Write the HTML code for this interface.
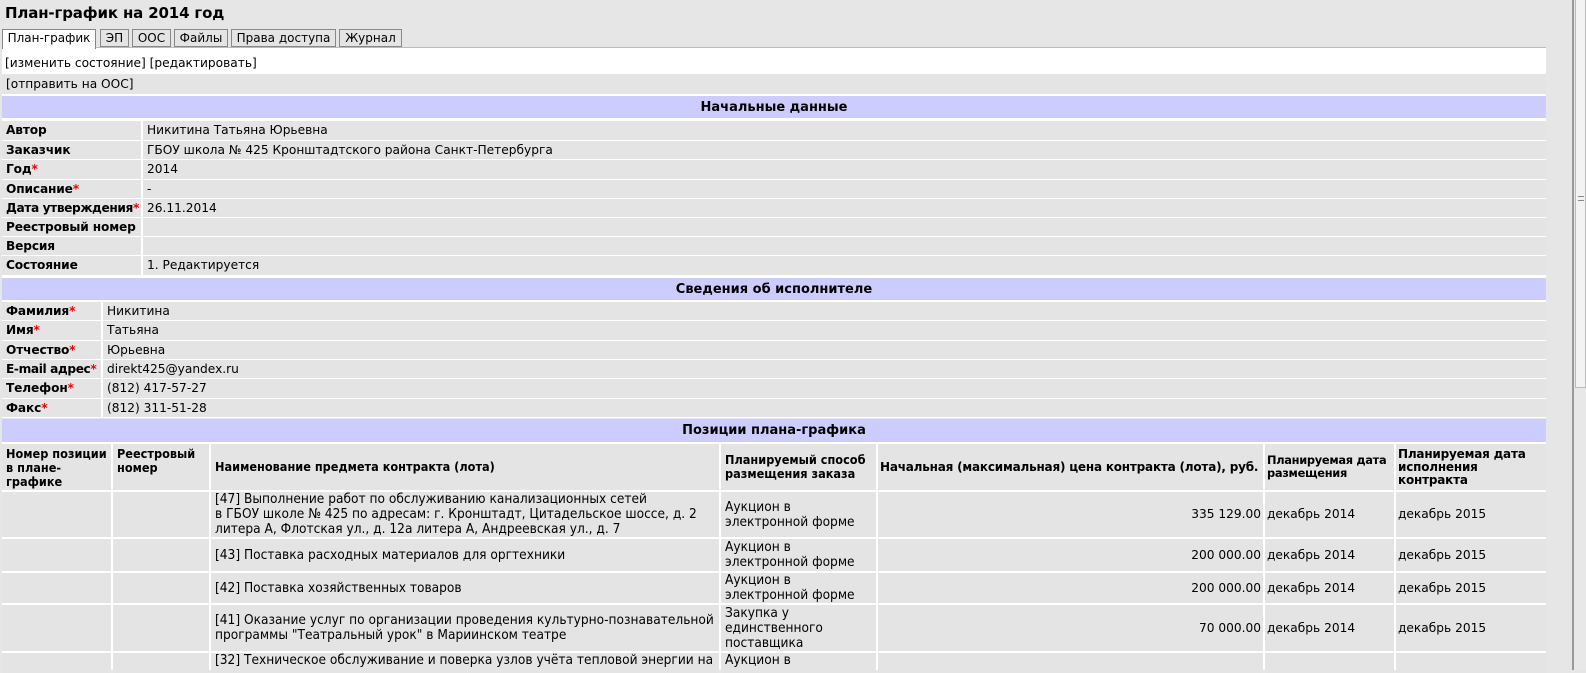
<!DOCTYPE html>
<html><head><meta charset="utf-8">
<style>
*{margin:0;padding:0;box-sizing:border-box}
body{width:1586px;height:670px;overflow:hidden;background:#e6e6e6;font-family:"DejaVu Sans",Verdana,sans-serif;font-size:12.2px;color:#000;position:relative}
.a{position:absolute}
.c{position:absolute;background:#e4e4e4;display:flex;align-items:center;padding-left:4px;white-space:nowrap;line-height:15px}
.b{font-weight:bold;letter-spacing:-0.15px}
.r{color:#e00}
.h{position:absolute;left:2px;width:1544px;background:#ccccff;font-weight:bold;font-size:13px;display:flex;align-items:center;justify-content:center}
.n{font-family:"DejaVu Sans Condensed","Liberation Sans Narrow",sans-serif;font-size:13.6px;line-height:15px;letter-spacing:0}
.nh{font-size:12.6px;line-height:14px}
.t{position:absolute;top:29px;height:18px;border:1px solid #888;background:#e4e4e4;font-size:12px;line-height:16px;text-align:center}
.th{align-items:flex-start;padding-top:3px;white-space:normal}
.wr{white-space:normal}
.hb{font-size:12px;letter-spacing:-0.2px;line-height:13px}
</style></head><body>
<div class="a b" style="left:5px;top:3px;font-size:15px;line-height:20px">План-график на 2014 год</div>
<div class="a" style="left:2px;top:47px;width:1544px;height:1px;background:#bbb"></div>
<div class="a" style="left:2px;top:48px;width:1544px;height:26px;background:#fff"></div>
<div class="t" style="left:2px;width:94px;background:#fff;border-bottom:none;height:20px">План-график</div>
<div class="t" style="left:100px;width:29px">ЭП</div>
<div class="t" style="left:132px;width:39px">ООС</div>
<div class="t" style="left:174px;width:54px">Файлы</div>
<div class="t" style="left:231px;width:105px">Права доступа</div>
<div class="t" style="left:339px;width:63px">Журнал</div>
<div class="a" style="left:5px;top:55px;line-height:16px">[изменить состояние] [редактировать]</div>
<div class="c" style="left:2px;top:75px;width:1544px;height:19px">[отправить на ООС]</div>
<div class="a" style="left:2px;top:94px;width:1544px;height:2px;background:#fff"></div>

<div class="h" style="top:96px;height:22px">Начальные данные</div>
<div class="a" style="left:2px;top:118px;width:1544px;height:300px;background:#fff"></div>
<div class="c b" style="left:2px;top:121px;width:139px;height:19px">Автор</div><div class="c" style="left:143px;top:121px;width:1403px;height:19px">Никитина Татьяна Юрьевна</div>
<div class="c b" style="left:2px;top:141px;width:139px;height:18px">Заказчик</div><div class="c" style="left:143px;top:141px;width:1403px;height:18px">ГБОУ школа № 425 Кронштадтского района Санкт-Петербурга</div>
<div class="c b" style="left:2px;top:160px;width:139px;height:19px">Год<span class="r">*</span></div><div class="c" style="left:143px;top:160px;width:1403px;height:19px">2014</div>
<div class="c b" style="left:2px;top:180px;width:139px;height:18px">Описание<span class="r">*</span></div><div class="c" style="left:143px;top:180px;width:1403px;height:18px">-</div>
<div class="c b" style="left:2px;top:199px;width:139px;height:18px;letter-spacing:-0.4px">Дата утверждения<span class="r">*</span></div><div class="c" style="left:143px;top:199px;width:1403px;height:18px">26.11.2014</div>
<div class="c b" style="left:2px;top:218px;width:139px;height:18px">Реестровый номер</div><div class="c" style="left:143px;top:218px;width:1403px;height:18px"></div>
<div class="c b" style="left:2px;top:237px;width:139px;height:18px">Версия</div><div class="c" style="left:143px;top:237px;width:1403px;height:18px"></div>
<div class="c b" style="left:2px;top:256px;width:139px;height:19px">Состояние</div><div class="c" style="left:143px;top:256px;width:1403px;height:19px">1. Редактируется</div>

<div class="h" style="top:278px;height:22px">Сведения об исполнителе</div>
<div class="c b" style="left:2px;top:302px;width:99px;height:18px">Фамилия<span class="r">*</span></div><div class="c" style="left:103px;top:302px;width:1443px;height:18px">Никитина</div>
<div class="c b" style="left:2px;top:321px;width:99px;height:19px">Имя<span class="r">*</span></div><div class="c" style="left:103px;top:321px;width:1443px;height:19px">Татьяна</div>
<div class="c b" style="left:2px;top:341px;width:99px;height:18px">Отчество<span class="r">*</span></div><div class="c" style="left:103px;top:341px;width:1443px;height:18px">Юрьевна</div>
<div class="c b" style="left:2px;top:360px;width:99px;height:18px;letter-spacing:-0.4px">E-mail адрес<span class="r">*</span></div><div class="c" style="left:103px;top:360px;width:1443px;height:18px">direkt425@yandex.ru</div>
<div class="c b" style="left:2px;top:379px;width:99px;height:19px">Телефон<span class="r">*</span></div><div class="c" style="left:103px;top:379px;width:1443px;height:19px">(812) 417-57-27</div>
<div class="c b" style="left:2px;top:399px;width:99px;height:18px">Факс<span class="r">*</span></div><div class="c" style="left:103px;top:399px;width:1443px;height:18px">(812) 311-51-28</div>

<div class="h" style="top:419px;height:23px">Позиции плана-графика</div>
<div class="a" style="left:2px;top:442px;width:1544px;height:228px;background:#fff"></div>
<div class="c b n nh th" style="left:2px;top:444px;width:109px;height:46px">Номер позиции в плане-графике</div>
<div class="c b n nh th" style="left:113px;top:444px;width:96px;height:46px">Реестровый номер</div>
<div class="c b n nh" style="left:211px;top:444px;width:508px;height:46px">Наименование предмета контракта (лота)</div>
<div class="c b n nh wr" style="left:721px;top:444px;width:155px;height:46px">Планируемый способ размещения заказа</div>
<div class="c b hb" style="left:878px;top:444px;width:385px;height:46px;padding-left:2px">Начальная (максимальная) цена контракта (лота), руб.</div>
<div class="c b wr hb" style="left:1265px;top:444px;width:129px;height:46px;padding-left:2px;font-size:11.4px;letter-spacing:-0.3px">Планируемая дата размещения</div>
<div class="c b wr th hb" style="left:1396px;top:444px;width:150px;height:46px;padding-left:2px;padding-top:4px">Планируемая дата исполнения контракта</div>

<div class="c" style="left:2px;top:492px;width:109px;height:45px"></div><div class="c" style="left:113px;top:492px;width:96px;height:45px"></div>
<div class="c n wr" style="left:211px;top:492px;width:508px;height:45px">[47] Выполнение работ по обслуживанию канализационных сетей<br>в ГБОУ школе № 425 по адресам: г. Кронштадт, Цитадельское шоссе, д. 2 литера А, Флотская ул., д. 12а литера А, Андреевская ул., д. 7</div>
<div class="c n wr" style="left:721px;top:492px;width:155px;height:45px">Аукцион в<br>электронной форме</div>
<div class="c" style="left:878px;top:492px;width:385px;height:45px;justify-content:flex-end;padding-right:2px">335 129.00</div>
<div class="c" style="left:1265px;top:492px;width:129px;height:45px;padding-left:2px">декабрь 2014</div>
<div class="c" style="left:1396px;top:492px;width:150px;height:45px;padding-left:2px">декабрь 2015</div>

<div class="c" style="left:2px;top:539px;width:109px;height:32px"></div><div class="c" style="left:113px;top:539px;width:96px;height:32px"></div>
<div class="c n" style="left:211px;top:539px;width:508px;height:32px">[43] Поставка расходных материалов для оргтехники</div>
<div class="c n wr" style="left:721px;top:539px;width:155px;height:32px">Аукцион в<br>электронной форме</div>
<div class="c" style="left:878px;top:539px;width:385px;height:32px;justify-content:flex-end;padding-right:2px">200 000.00</div>
<div class="c" style="left:1265px;top:539px;width:129px;height:32px;padding-left:2px">декабрь 2014</div>
<div class="c" style="left:1396px;top:539px;width:150px;height:32px;padding-left:2px">декабрь 2015</div>

<div class="c" style="left:2px;top:573px;width:109px;height:30px"></div><div class="c" style="left:113px;top:573px;width:96px;height:30px"></div>
<div class="c n" style="left:211px;top:573px;width:508px;height:30px">[42] Поставка хозяйственных товаров</div>
<div class="c n wr" style="left:721px;top:573px;width:155px;height:30px">Аукцион в<br>электронной форме</div>
<div class="c" style="left:878px;top:573px;width:385px;height:30px;justify-content:flex-end;padding-right:2px">200 000.00</div>
<div class="c" style="left:1265px;top:573px;width:129px;height:30px;padding-left:2px">декабрь 2014</div>
<div class="c" style="left:1396px;top:573px;width:150px;height:30px;padding-left:2px">декабрь 2015</div>

<div class="c" style="left:2px;top:605px;width:109px;height:46px"></div><div class="c" style="left:113px;top:605px;width:96px;height:46px"></div>
<div class="c n wr" style="left:211px;top:605px;width:508px;height:46px">[41] Оказание услуг по организации проведения культурно-познавательной<br>программы "Театральный урок" в Мариинском театре</div>
<div class="c n wr" style="left:721px;top:605px;width:155px;height:46px">Закупка у<br>единственного<br>поставщика</div>
<div class="c" style="left:878px;top:605px;width:385px;height:46px;justify-content:flex-end;padding-right:2px">70 000.00</div>
<div class="c" style="left:1265px;top:605px;width:129px;height:46px;padding-left:2px">декабрь 2014</div>
<div class="c" style="left:1396px;top:605px;width:150px;height:46px;padding-left:2px">декабрь 2015</div>

<div class="c" style="left:2px;top:653px;width:109px;height:20px"></div><div class="c" style="left:113px;top:653px;width:96px;height:20px"></div>
<div class="c n" style="left:211px;top:653px;width:508px;height:20px;align-items:flex-start;overflow:hidden">[32] Техническое обслуживание и поверка узлов учёта тепловой энергии на</div>
<div class="c n" style="left:721px;top:653px;width:155px;height:20px;align-items:flex-start">Аукцион в</div>
<div class="c" style="left:878px;top:653px;width:385px;height:20px"></div>
<div class="c" style="left:1265px;top:653px;width:129px;height:20px"></div>
<div class="c" style="left:1396px;top:653px;width:150px;height:20px"></div>

<div class="a" style="left:1572px;top:0;width:2px;height:670px;background:#999"></div>
<div class="a" style="left:1574px;top:0;width:12px;height:670px;background:#e8e8e8"></div>
<div class="a" style="left:1575px;top:0;width:11px;height:388px;background:#f3f3f3;border:1px solid #bbb;border-top:none"></div>
<div class="a" style="left:1578px;top:196px;width:6px;height:5px;border-top:1px solid #888;border-bottom:1px solid #888"></div>
</body></html>
